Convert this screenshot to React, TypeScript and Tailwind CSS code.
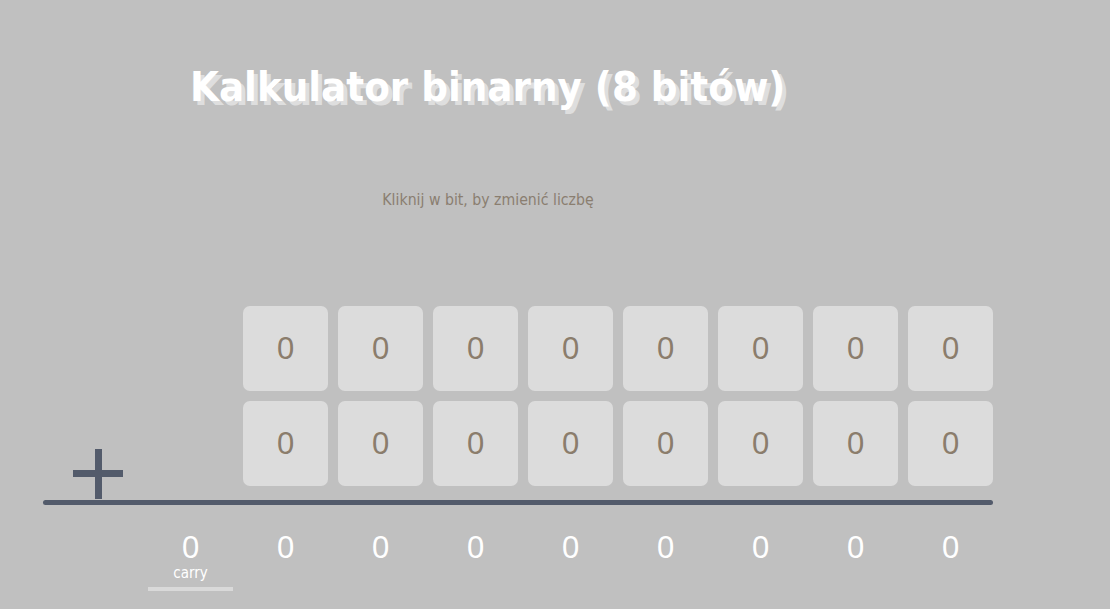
import { useState } from 'react';

const BITS = 8;

function BitCell({ value, onClick }: { value: number; onClick: () => void }) {
  return (
    <button
      onClick={onClick}
      className="w-[85px] h-[85px] rounded-[7px] bg-[#dcdcdc] flex items-center justify-center text-[31px] text-[#8b7d6c] font-['Liberation_Sans',sans-serif] leading-none cursor-pointer"
    >
      {value}
    </button>
  );
}

export default function App() {
  const [a, setA] = useState<number[]>(Array(BITS).fill(0));
  const [b, setB] = useState<number[]>(Array(BITS).fill(0));

  const toggle = (row: 'a' | 'b', i: number) => {
    const set = row === 'a' ? setA : setB;
    set((prev) => prev.map((v, j) => (j === i ? 1 - v : v)));
  };

  // sum from the right, carry out goes to the leftmost slot
  const sum: number[] = Array(BITS).fill(0);
  let carry = 0;
  for (let i = BITS - 1; i >= 0; i--) {
    const s = a[i] + b[i] + carry;
    sum[i] = s % 2;
    carry = s > 1 ? 1 : 0;
  }

  return (
    <div className="w-full h-[609px] bg-[#c0c0c0] overflow-hidden font-['DejaVu_Sans_Condensed','DejaVu_Sans',sans-serif]">
      <div className="pt-[62px] pl-[190px]">
        <h1 className="text-[41.5px] font-bold text-white leading-[50px] [text-shadow:4px_4px_0_#dedede]">
          Kalkulator binarny (8 bitów)
        </h1>
      </div>

      <div className="mt-[76px] w-[976px] text-center text-[15.7px] text-[#8a7e70]">
        Kliknij w bit, by zmienić liczbę
      </div>

      <div className="mt-[94px] flex flex-col">
        <div className="ml-[243px] flex gap-[10px]">
          {a.map((v, i) => (
            <BitCell key={i} value={v} onClick={() => toggle('a', i)} />
          ))}
        </div>

        <div className="mt-[10px] flex items-end">
          <div className="ml-[73px] w-[50px] h-[50px] -mb-[13px]">
            <svg width="50" height="50" viewBox="0 0 50 50">
              <rect x="22" y="0" width="7" height="50" fill="#535b6b" />
              <rect x="0" y="21" width="50" height="7" fill="#535b6b" />
            </svg>
          </div>
          <div className="ml-[120px] flex gap-[10px]">
            {b.map((v, i) => (
              <BitCell key={i} value={v} onClick={() => toggle('b', i)} />
            ))}
          </div>
        </div>

        <div className="mt-[14px] ml-[43px] w-[950px] h-[5px] rounded-full bg-[#535b6b]" />

        <div className="ml-[148px] mt-[26px] flex gap-[10px] font-['Liberation_Sans',sans-serif]">
          <div className="w-[85px] flex flex-col items-center">
            <span className="text-[31px] leading-[34px] text-white">{carry}</span>
            <span className="text-[15px] leading-[16px] text-white font-['DejaVu_Sans_Condensed','DejaVu_Sans',sans-serif]">carry</span>
            <div className="mt-[6px] w-[85px] h-[4px] bg-[#d9d9d9]" />
          </div>
          {sum.map((v, i) => (
            <div key={i} className="w-[85px] text-center text-[31px] leading-[34px] text-white">
              {v}
            </div>
          ))}
        </div>
      </div>
    </div>
  );
}
